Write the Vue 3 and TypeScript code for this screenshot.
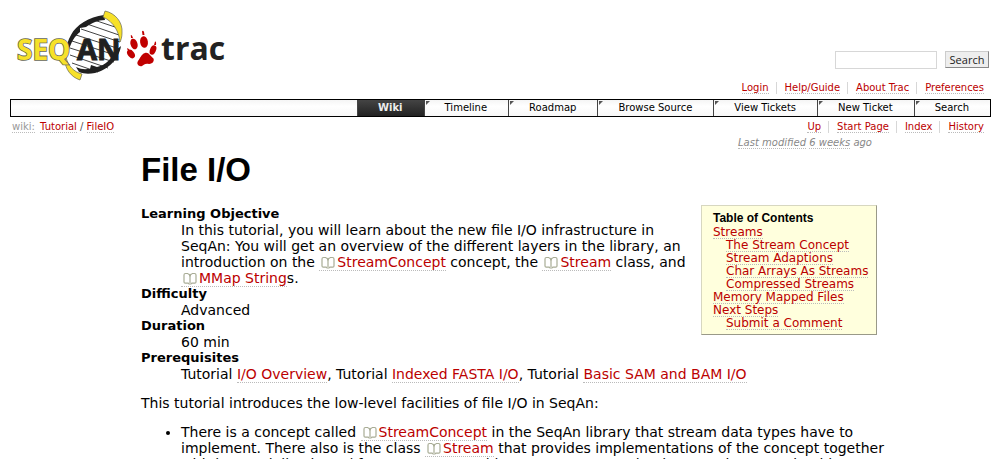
<script setup lang="ts">
import { defineComponent, h } from 'vue'

interface TocItem { label: string; depth: number }

const metaLinks: string[] = ['Login', 'Help/Guide', 'About Trac', 'Preferences']
const navItems: string[] = ['Wiki', 'Timeline', 'Roadmap', 'Browse Source', 'View Tickets', 'New Ticket', 'Search']
const contextLinks: string[] = ['Up', 'Start Page', 'Index', 'History']
const toc: TocItem[] = [
  { label: 'Streams', depth: 0 },
  { label: 'The Stream Concept', depth: 1 },
  { label: 'Stream Adaptions', depth: 1 },
  { label: 'Char Arrays As Streams', depth: 1 },
  { label: 'Compressed Streams', depth: 1 },
  { label: 'Memory Mapped Files', depth: 0 },
  { label: 'Next Steps', depth: 0 },
  { label: 'Submit a Comment', depth: 1 },
]

const BookIcon = defineComponent({
  render: () =>
    h('svg', { viewBox: '0 0 14 13', width: 14, height: 13, 'aria-hidden': 'true' }, [
      h('path', {
        d: 'M5 1.5H2.5Q1 1.5 1 3V10Q1 11.2 2.3 11.2H5.2L6 12H8L8.8 11.2H11.7Q13 11.2 13 10V3Q13 1.5 11.5 1.5H9M4.5 1.5Q7 2 7 5V11M9.5 1.5Q7 2 7 5',
        fill: 'none',
        stroke: '#a8ac95',
        'stroke-width': 1.2,
      }),
    ]),
})
</script>

<template>
  <div class="page">
    <header class="banner">
      <a class="logo" href="#" aria-label="SeqAn trac">
        <svg viewBox="0 0 220 74" width="220" height="74">
          <path d="M94 7C80 10 66 19 61 31C56 43 56 55 66 63C84 67 104 57 110 40C112 27 106 12 94 7Z" fill="#fff" />
          <path d="M84 12L108 20M77 16L109 27M71 21L110 34M66 27L110 41M62 33L108 48M60 40L104 54M60 47L98 60M62 55L88 64" fill="none" stroke="#444" stroke-width="1" />
          <path d="M94 7C79 9 66 17 61 27C58 32 56 38 56 44L59 42C61 34 65 28 70 24L70 20L76 19C82 15 88 12 95 12Z" fill="#202020" />
          <path d="M111 38C109 51 98 62 85 65C79 66 74 66 69 64L66 59C72 62 76 61 80 61L81 57L87 59C96 57 102 50 105 43Z" fill="#202020" />
          <path d="M95 3C105 5 113 14 112 25C112 29 111 32 110 34C109 24 104 14 93 9Z" fill="#f7e129" stroke="#665" stroke-width=".7" />
          <path d="M56 49C58 58 64 64 72 66L70 72C61 69 55 61 55 52Z" fill="#f7e129" stroke="#665" stroke-width=".7" />
          <text x="7" y="52" class="logo-seq">SEQ</text>
          <text x="67" y="52" class="logo-an">AN</text>
          <g fill="#c00000">
            <ellipse cx="134" cy="34" rx="3.9" ry="5.8" transform="rotate(-8 134 34)" />
            <ellipse cx="124" cy="36" rx="3.5" ry="5.4" transform="rotate(-18 124 36)" />
            <ellipse cx="143" cy="42" rx="3" ry="4.9" transform="rotate(22 143 42)" />
            <ellipse cx="121" cy="46" rx="3.2" ry="4.8" transform="rotate(-38 121 46)" />
            <path d="M132.500 27L132 23.500Q133 22 134 24L134.500 27ZM121 30L120.800 27Q122 26.500 123 30ZM144 37L145 33.500Q146.500 33 146 37ZM118 43L117 40.500Q118.500 39.500 120 43Z" />
            <path d="M135 45C139 44 140 48 143 50C145 52 143 56 139 56C135 55 134 57 132 58C129 59 126 56 128 53C130 51 131 46 135 45Z" />
          </g>
          <text x="151" y="52" class="logo-trac">trac</text>
        </svg>
      </a>
      <form class="search" @submit.prevent>
        <input type="text" aria-label="Search query" />
        <button type="submit">Search</button>
      </form>
      <ul class="links meta">
        <li v-for="l in metaLinks" :key="l"><a href="#">{{ l }}</a></li>
      </ul>
    </header>

    <nav class="mainnav">
      <a v-for="(n, i) in navItems" :key="n" href="#" :class="{ active: i === 0 }">{{ n }}</a>
    </nav>

    <div class="context">
      <div class="path"><a class="root" href="#">wiki:</a> <a href="#">Tutorial</a> / <a href="#">FileIO</a></div>
      <ul class="links">
        <li v-for="l in contextLinks" :key="l"><a href="#">{{ l }}</a></li>
      </ul>
    </div>

    <main class="wiki">
      <p class="modified"><a href="#">Last modified</a> <a href="#">6 weeks</a> ago</p>
      <h1>File I/O</h1>
      <nav class="toc">
        <h4>Table of Contents</h4>
        <ol>
          <li v-for="t in toc" :key="t.label" :class="{ sub: t.depth }"><a href="#">{{ t.label }}</a></li>
        </ol>
      </nav>
      <dl>
        <dt>Learning Objective</dt>
        <dd>
          In this tutorial, you will learn about the new file I/O infrastructure in SeqAn: You will get an overview of the different layers in the library, an introduction on the <a class="ext" href="#"><BookIcon />StreamConcept</a> concept, the <a class="ext" href="#"><BookIcon />Stream</a> class, and <a class="ext" href="#"><BookIcon />MMap String</a>s.
        </dd>
        <dt>Difficulty</dt>
        <dd>Advanced</dd>
        <dt>Duration</dt>
        <dd>60 min</dd>
        <dt>Prerequisites</dt>
        <dd>Tutorial <a href="#">I/O Overview</a>, Tutorial <a href="#">Indexed FASTA I/O</a>, Tutorial <a href="#">Basic SAM and BAM I/O</a></dd>
      </dl>
      <p>This tutorial introduces the low-level facilities of file I/O in SeqAn:</p>
      <ul class="bullets">
        <li>
          There is a concept called <a class="ext" href="#"><BookIcon />StreamConcept</a> in the SeqAn library that stream data types have to implement. There also is the class <a class="ext" href="#"><BookIcon />Stream</a> that provides implementations of the concept together with its specializations. (If you want to provide your own Stream implementation, you should
        </li>
      </ul>
    </main>
  </div>
</template>

<style>
html, body { margin: 0; height: 100%; overflow: hidden; background: #fff; }
</style>

<style scoped>
.page {
  padding: 8px 10px 0;
  font: 14px/16px Verdana, "DejaVu Sans", sans-serif;
  color: #000;
}
a { color: #b00; text-decoration: none; border-bottom: 1px dotted #bbb; }
ul, ol { list-style: none; margin: 0; padding: 0; }
.banner {
  display: grid;
  grid-template-columns: auto 1fr;
  grid-template-rows: 72px 19px;
}
.logo { border: 0; grid-row: 1 / 3; }
.logo svg { display: block; }
.logo-seq, .logo-an { font: bold 29px "Open Sans", sans-serif; }
.logo-seq { font-size: 28px; fill: #f7e129; stroke: #665; stroke-width: 1.6px; paint-order: stroke; }
.logo-an { fill: #202020; stroke: #202020; stroke-width: 1px; }
.logo-trac { font: bold 32px "Open Sans", sans-serif; fill: #222; }
.search { display: flex; gap: 8px; align-self: start; justify-self: end; margin: 43px 2px 0 0; }
.search input {
  box-sizing: border-box; width: 102px; height: 18px;
  border: 1px solid #d7d7d7; padding: 0 3px; font-size: 11px;
}
.search button {
  box-sizing: border-box; width: 44px; height: 17px; padding: 0;
  font: 11px/13px "Open Sans", sans-serif; color: #222; background: #eee;
  border: 1px solid; border-color: #ccc #888 #888 #ccc;
}
.links { display: flex; justify-content: flex-end; font-size: 10px; line-height: 12px; }
.links li { padding: 0 7px 0 8px; border-left: 1px solid #d7d7d7; }
.links li:first-child { border-left: 0; }
.links a, .path a, .modified a, .toc a { display: inline-block; }
.links a, .path a, .modified a { line-height: 11px; }
.meta { align-self: start; margin-top: 2px; }
.mainnav {
  display: flex; justify-content: flex-end;
  border: 1px solid #000; background: linear-gradient(#f5f5f5, #fff 40%, #f7f7f7);
  font-size: 10px; line-height: 16px;
}
.mainnav a {
  position: relative; padding: 0 21px 0 20px; color: #000;
  border: 0; border-left: 1px solid #444;
}
.mainnav a::before {
  content: ""; position: absolute; left: 1px; top: 1px;
  border-top: 4px solid #555; border-right: 4px solid transparent;
}
.mainnav a.active { color: #eee; font-weight: bold; background: linear-gradient(#444, #222); }
.mainnav a.active::before { display: none; }
.context { display: flex; justify-content: space-between; padding-top: 4px; font-size: 10px; line-height: 12px; }
.path { padding-left: 2px; color: #555; }
.path .root { color: #999; margin-right: 2px; }
.wiki { margin: 0 114px 0 131px; }
.modified { margin: 4px 5px 1px; text-align: right; font-size: 10px; font-style: italic; line-height: 12px; color: #888; }
.modified a { color: #888; }
h1 { margin: 0 0 16px; font: bold 33px/39px "Liberation Sans", Arial, sans-serif; }
.toc {
  float: right; box-sizing: border-box; width: 176px; padding: 5px 11px 4px; margin-left: 10px;
  background: #ffd; border: 1px solid; border-color: #d7d7c0 #998 #998 #d7d7c0;
  font-size: 12px; line-height: 13px;
}
.toc h4 { margin: 0 0 1px; font: bold 12px/14px "Liberation Sans", Arial, sans-serif; }
.toc li { height: 13px; white-space: nowrap; }
.toc a { line-height: 12px; }
.toc .sub { padding-left: 13px; }
dl { margin: 0; padding-top: 1px; }
dt { font-size: 13px; font-weight: bold; }
dd { margin: 0 0 0 40px; }
.wiki > p:not(.modified) { margin: 13px 0; }
.ext { white-space: nowrap; }
.ext svg { vertical-align: -2px; margin: 0 2px; }
.bullets { list-style: disc; padding-left: 40px; margin-right: -12px; }
</style>
